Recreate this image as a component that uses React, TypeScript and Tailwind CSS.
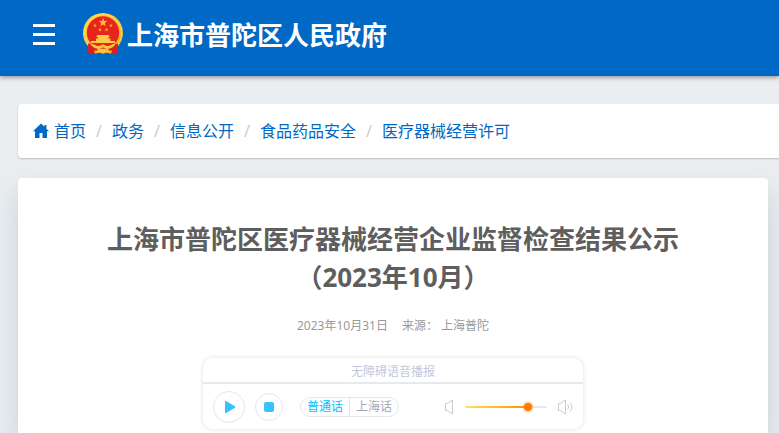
import { useState } from 'react';

type Crumb = { label: string; href: string };

const CRUMBS: Crumb[] = [
  { label: '政务', href: '#zhengwu' },
  { label: '信息公开', href: '#xinxi' },
  { label: '食品药品安全', href: '#shipin' },
  { label: '医疗器械经营许可', href: '#yiliao' },
];

const VOICES = ['普通话', '上海话'];

const Emblem = () => (
  <svg viewBox="0 0 40 42" className="h-[42px] w-10" aria-hidden="true">
    <defs>
      <linearGradient id="gold" x1="0" y1="0" x2="1" y2="1">
        <stop offset="0" stopColor="#ffd84a" />
        <stop offset="0.5" stopColor="#f7c53a" />
        <stop offset="1" stopColor="#eeb030" />
      </linearGradient>
      <path
        id="star"
        d="M0-2l.5 1.400 1.500.1-1.200.9.5 1.500L0 1.100l-1.300.8.5-1.500L-2-.5l1.500-.1z"
      />
    </defs>
    <path d="M5 31l.5 9.500c2.500 1.200 5 .8 7 0h15c2 .8 4.500 1.200 7 0L35 31z" fill="#d8201c" />
    <circle cx="20" cy="20" r="20" fill="url(#gold)" />
    <circle cx="20" cy="20" r="18.500" fill="none" stroke="#ffe070" strokeWidth="1" strokeDasharray="3 2" />
    <circle cx="20" cy="19.500" r="16.200" fill="#e8241c" />
    <path
      d="M20 5l1.100 3.100h3.200l-2.500 2 .9 3.100-2.700-1.800-2.700 1.800.9-3.100-2.500-2h3.200z"
      fill="#ffbe3a"
    />
    <g fill="#f6a033">
      <use href="#star" x="12" y="12.300" />
      <use href="#star" x="28" y="12.300" />
      <use href="#star" x="17" y="16.600" />
      <use href="#star" x="23.500" y="16.600" />
    </g>
    <path d="M14.500 22h11l1.500 2h-1.500v1.500h2V28H32v2H8v-2h5v-2.500h2V24h-2z" fill="#ffcb45" />
    {/* sash and gear under the gate */}
    <path d="M5 30.500c4 0 8 .5 11 3.500l-4 6.500c-2.500.8-5 .8-6.500 0z" fill="#dc1f1b" />
    <path d="M35 30.500c-4 0-8 .5-11 3.500l4 6.500c2.500.8 5 .8 6.500 0z" fill="#dc1f1b" />
    <path
      d="M7 30.500c4 0 6 2.800 9 2.500 1.500-.2 2.500-1.500 4-1.500s2.500 1.300 4 1.500c3 .3 5-2.500 9-2.500-2 3-5 5.500-8.500 5.500-2 0-3-1.500-4.500-1.500S17.500 36 15.500 36C12 36 9 33.500 7 30.500z"
      fill="#f9c63f"
    />
    <path d="M11 37.500l4 .5 1 1.500-4 1.200zM29 37.500l-4 .5-1 1.500 4 1.200z" fill="#f6b933" />
    <circle cx="20" cy="38.500" r="2.200" fill="#f6c43a" />
  </svg>
);

const HomeIcon = () => (
  <svg viewBox="0 0 16 16" className="h-4 w-4" fill="currentColor" aria-hidden="true">
    <path d="M8 .5L0 8.300h2V15h4.500v-5h3v5H14V8.300h2L13.400 5.700V2h-2v1.800z" />
  </svg>
);

const SpeakerIcon = ({ loud }: { loud?: boolean }) => (
  <svg
    viewBox={loud ? '0 0 18 16' : '0 0 11 16'}
    className={loud ? 'h-4 w-[18px]' : 'h-4 w-[11px]'}
    fill="none"
    stroke="#c9cad2"
    strokeLinejoin="round"
    aria-hidden="true"
  >
    <path d="M1.500 4.500h2l5-3.500v14l-5-3.500h-2z" />
    {loud && <path d="M10.500 5.500c1.400 1.500 1.400 3.500 0 5M13 3.500c2.600 2.600 2.600 6.400 0 9" />}
  </svg>
);

const Header = () => (
  <header className="relative z-10 flex h-[76px] items-center bg-[#0069c5] pl-[33px] shadow-[0_1px_5px_rgba(0,0,0,0.45)]">
    <button type="button" aria-label="菜单" className="mb-2 flex w-[22px] flex-col gap-[6px]">
      <span className="h-[3px] bg-white" />
      <span className="h-[3px] bg-white" />
      <span className="h-[3px] bg-white" />
    </button>
    <a href="#home" className="mb-2 ml-7 flex items-center gap-1 text-[26px] leading-8 font-bold text-white">
      <Emblem />
      <span className="pt-[2px]">上海市普陀区人民政府</span>
    </a>
  </header>
);

const Breadcrumb = () => (
  <nav
    aria-label="当前位置"
    className="ml-[18px] flex h-[54px] items-center rounded-l bg-white pl-[15px] text-base text-[#0069c5] shadow-[0_1px_2px_rgba(0,0,0,0.2)]"
  >
    <a href="#home" className="flex items-center gap-[5px]">
      <HomeIcon />
      首页
    </a>
    {CRUMBS.map((c) => (
      <span key={c.href} className="flex">
        <span className="w-[26px] text-center text-[#cccccc]">/</span>
        <a href={c.href}>{c.label}</a>
      </span>
    ))}
  </nav>
);

const Player = () => {
  const [voice, setVoice] = useState(VOICES[0]);
  const [volume, setVolume] = useState(80);

  return (
    <section className="mx-auto mt-[22px] w-[380px] rounded-[10px] bg-white text-xs shadow-[0_0_5px_rgba(0,0,0,0.13)]">
      <h2 className="border-b-2 border-[#e6e9ef] pt-[5px] pb-px text-center leading-[18px] text-[#c3c6dc]">
        无障碍语音播报
      </h2>
      <div className="flex h-[45px] items-center pr-2 pl-[10px]">
        <button
          type="button"
          aria-label="播放"
          className="flex h-8 w-8 items-center justify-center rounded-full border border-[#e6e6f0]"
        >
          <svg viewBox="0 0 12 14" className="ml-[2px] h-[14px] w-3" fill="#35c3ff" aria-hidden="true">
            <path d="M1 1.500q0-1.200 1-.6l9 5.400q1 .7 0 1.400l-9 5.400q-1 .6-1-.6z" />
          </svg>
        </button>
        <button
          type="button"
          aria-label="停止"
          className="ml-[10px] flex h-7 w-7 items-center justify-center rounded-full border border-[#e6e6f0]"
        >
          <span className="h-[10px] w-[10px] rounded-[2px] bg-[#35c3ff]" />
        </button>
        <div className="ml-[17px] flex h-5 w-[99px] divide-x divide-[#e6e6f0] rounded-full border border-[#e6e6f0]">
          {VOICES.map((v) => (
            <button
              key={v}
              type="button"
              aria-pressed={voice === v}
              onClick={() => setVoice(v)}
              className={
                voice === v
                  ? 'flex-1 leading-[18px] text-[#00bfff]'
                  : 'flex-1 leading-[18px] text-[#a3a6b5]'
              }
            >
              {v}
            </button>
          ))}
        </div>
        <div className="ml-auto flex items-center gap-[10px]">
          <SpeakerIcon />
          <input
            type="range"
            aria-label="音量"
            min={0}
            max={100}
            value={volume}
            onChange={(e) => setVolume(Number(e.target.value))}
            style={{
              backgroundImage: `linear-gradient(to right, #ffe45c, #ff8a00 ${volume}%, #e6e9ef ${volume}%)`,
            }}
            className="h-[2px] w-[82px] appearance-none rounded-full [&::-webkit-slider-thumb]:h-2 [&::-webkit-slider-thumb]:w-2 [&::-webkit-slider-thumb]:appearance-none [&::-webkit-slider-thumb]:rounded-full [&::-webkit-slider-thumb]:bg-[#ff7d00] [&::-webkit-slider-thumb]:shadow-[0_0_3px_#ff7d00]"
          />
          <SpeakerIcon loud />
        </div>
      </div>
    </section>
  );
};

export default function App() {
  return (
    <div className="flex min-h-screen flex-col overflow-hidden bg-[#eaeef1] font-['Noto_Sans','Noto_Sans_CJK_SC',sans-serif]">
      <Header />
      <main className="mt-7 flex flex-1 flex-col">
        <Breadcrumb />
        <article className="mt-5 mr-[11px] ml-[18px] flex-1 rounded-t bg-white px-20 pt-[42px] pb-[3px] shadow-[0_14px_28px_rgba(40,70,90,0.18)]">
          <h1 className="text-center text-[26px] leading-[38px] font-bold text-[#5e5e5e]">
            上海市普陀区医疗器械经营企业监督检查结果公示
            <br />
            （2023年10月）
          </h1>
          <p className="mt-5 flex justify-center gap-[14px] text-xs leading-5 text-[#999999]">
            <time dateTime="2023-10-31">2023年10月31日</time>
            <span>来源： 上海普陀</span>
          </p>
          <Player />
        </article>
      </main>
    </div>
  );
}
